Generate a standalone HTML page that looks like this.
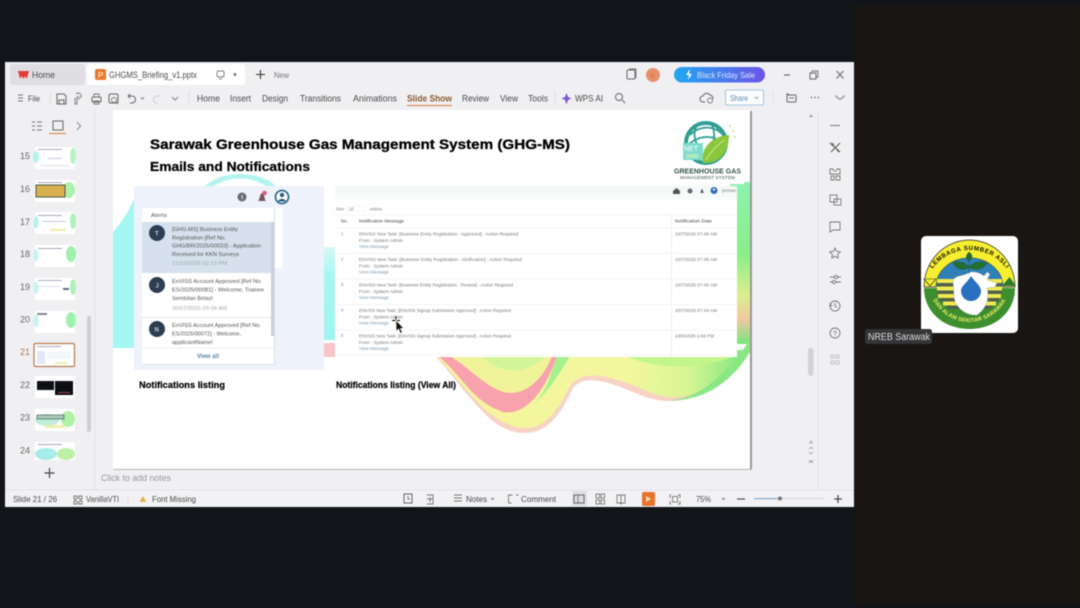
<!DOCTYPE html>
<html><head><meta charset="utf-8"><style>
html,body{margin:0;padding:0;width:1080px;height:608px;overflow:hidden;background:#111418}
svg{display:block;filter:blur(.5px)}
text{font-family:"Liberation Sans",sans-serif}
.t{font-size:9px;fill:#4a4a4a}
.s{font-size:5.2px;fill:#555}
.m{font-size:4.2px;fill:#777}
.l{font-size:4.2px;fill:#7b9bb2}
.b{font-weight:bold;fill:#000}
.i{fill:none;stroke:#666;stroke-width:1}
.r{fill:none;stroke:#777;stroke-width:.9}
</style></head><body>
<svg width="1080" height="608" viewBox="0 0 1080 608" xmlns="http://www.w3.org/2000/svg">
<defs>
<linearGradient id="pill" x1="0" x2="1"><stop offset="0" stop-color="#22a6f2"/><stop offset="1" stop-color="#6a55e8"/></linearGradient>
<linearGradient id="rg" x1="0" x2="0" y1="0" y2="1"><stop offset="0" stop-color="#8ef2b0"/><stop offset=".45" stop-color="#8cee88"/><stop offset=".7" stop-color="#dcee90"/><stop offset=".85" stop-color="#f0c8a0"/><stop offset="1" stop-color="#74e67c"/></linearGradient>
<linearGradient id="wv" x1="0" x2="1"><stop offset="0" stop-color="#f4f59a"/><stop offset=".6" stop-color="#f4f7a0"/><stop offset=".8" stop-color="#d9f594"/><stop offset="1" stop-color="#74e87c"/></linearGradient>
<linearGradient id="tp" x1="0" x2="0" y1="0" y2="1"><stop offset="0" stop-color="#f0f8f5"/><stop offset="1" stop-color="#f9fcfb"/></linearGradient>
<linearGradient id="cy" x1="0" x2="0" y1="0" y2="1"><stop offset="0" stop-color="#d4faf7"/><stop offset=".3" stop-color="#a8f6f2"/><stop offset="1" stop-color="#a0f4ef"/></linearGradient>
<path id="arcT" d="M930.500 271.600A46 46 0 0 1 1008.500 271.600"/>
<path id="arcB" d="M928.500 281A41 41 0 0 0 1010.500 281"/>
</defs>

<rect x="855" y="5" width="225" height="600" fill="#181513"/>

<!-- window -->
<rect x="5" y="62" width="849" height="445" fill="#f0f0f3"/>
<rect x="10" y="64" width="75" height="21" rx="3" fill="#dfdfe3"/>
<rect x="87" y="64" width="158" height="21" rx="3" fill="#fff"/>
<path d="M18 71h11l-2.200 8-1.600-3-1.700 3-1.700-3-1.600 3z" fill="#e23a3a"/>
<text class="t" x="32" y="78" textLength="23" lengthAdjust="spacingAndGlyphs" fill="#555">Home</text>
<rect x="95" y="69" width="11" height="11" rx="2" fill="#e8792b"/>
<text x="98" y="78" font-size="8" fill="#fff">P</text>
<text class="t" x="109" y="78" textLength="88" lengthAdjust="spacingAndGlyphs">GHGMS_Briefing_v1.pptx</text>
<rect x="217" y="71" width="7" height="6" rx="1.500" class="r"/><path d="M219 79h3" class="r"/>
<circle cx="235" cy="74.500" r="1.500" fill="#777"/>
<path d="M256 74.500h9M260.500 70v9" stroke="#333" stroke-width="1.100" fill="none"/>
<text class="s" x="274" y="78" style="font-size:8px;fill:#777" textLength="15" lengthAdjust="spacingAndGlyphs">New</text>

<rect x="627" y="70" width="8" height="9" rx="1" class="i"/><path d="M629 69h7v9" class="r"/>
<circle cx="653" cy="75" r="7" fill="#e8906a"/>
<text x="650" y="78" font-size="6" fill="#c96a45">N</text>
<rect x="674" y="67" width="91" height="15.500" rx="7.700" fill="url(#pill)"/>
<path d="M690 69l-4 6h3l-1 5 4-6h-3z" fill="#fff"/>
<text x="697" y="78" font-size="8.500" fill="#d8e6fa" textLength="58" lengthAdjust="spacingAndGlyphs">Black Friday Sale</text>
<path d="M784 75h6" stroke="#555"/>
<rect x="810" y="73" width="6" height="6" class="i"/><path d="M812 73v-2h6v6h-2" class="r"/>
<path d="M836.500 71l7 7.500M843.500 71l-7 7.500" class="i"/>

<!-- toolbar -->
<path d="M18 95h5M18 98h5M18 101h5" class="r"/>
<text class="t" x="28" y="101.500" style="font-size:8.500px" textLength="12" lengthAdjust="spacingAndGlyphs">File</text>
<path d="M50 93v12" stroke="#ddd"/>
<path d="M57 94h7l2 2v8h-9z M59 100h5v4h-5z" class="i"/>
<path d="M76 94a3 3 0 0 1 5 3l-4 3v4h-2v-5l4-3" class="r"/>
<rect x="92" y="97" width="9" height="5" rx="1" class="i"/><path d="M94 97v-3h5v3M94 101h5v3h-5z" class="r"/>
<rect x="109" y="94" width="9" height="9" rx="1.500" class="i"/><circle cx="114" cy="100" r="2.500" class="r"/><path d="M116 102l2 2" class="r"/>
<path d="M128 96h4a3 3 0 0 1 0 7h-2M128 96l2-2M128 96l2 2" class="i"/>
<path d="M141 97.500l1.500 1.500 1.500-1.500" class="r"/>
<path d="M160 96h-3a3 3 0 0 0 0 7h1" fill="none" stroke="#ccc"/>
<path d="M172 97l3 3 3-3" class="r"/>
<path d="M189 92v13" stroke="#ddd"/>
<text class="t" x="197" y="101.500" textLength="23" lengthAdjust="spacingAndGlyphs">Home</text>
<text class="t" x="230" y="101.500" textLength="21" lengthAdjust="spacingAndGlyphs">Insert</text>
<text class="t" x="262" y="101.500" textLength="26" lengthAdjust="spacingAndGlyphs">Design</text>
<text class="t" x="300" y="101.500" textLength="41" lengthAdjust="spacingAndGlyphs">Transitions</text>
<text class="t" x="353" y="101.500" textLength="44" lengthAdjust="spacingAndGlyphs">Animations</text>
<text class="t" x="407" y="101.500" textLength="45" lengthAdjust="spacingAndGlyphs" style="fill:#8c5a30;font-weight:bold">Slide Show</text>
<rect x="407" y="105" width="45" height="1" fill="#d9783a"/>
<text class="t" x="462" y="101.500" textLength="27" lengthAdjust="spacingAndGlyphs">Review</text>
<text class="t" x="500" y="101.500" textLength="18" lengthAdjust="spacingAndGlyphs">View</text>
<text class="t" x="528" y="101.500" textLength="20" lengthAdjust="spacingAndGlyphs">Tools</text>
<path d="M555 92v13" stroke="#ddd"/>
<path d="M566.500 93l1.500 4 3.500 1.500-3.500 1.500-1.500 4.500-1.500-4.500-3.500-1.500 3.500-1.500z" fill="#7a55d8"/>
<text class="t" x="575" y="101.500" textLength="28" lengthAdjust="spacingAndGlyphs">WPS AI</text>
<circle cx="619" cy="97" r="3.500" class="i"/><path d="M622 100l3 3" class="i"/>
<path d="M705 102h-2a3 3 0 0 1 0-6 4 4 0 0 1 7-1 3.500 3.500 0 0 1 3 4" class="i"/><circle cx="710" cy="100.500" r="2.500" class="r"/>
<rect x="725.500" y="90" width="38" height="15" rx="1.500" fill="#fbfcfe" stroke="#8cb8d8" stroke-width=".8"/>
<text x="730" y="101" font-size="8.500" fill="#5b8cb0" textLength="18" lengthAdjust="spacingAndGlyphs">Share</text>
<path d="M755 97l1.500 1.500 1.500-1.500" stroke="#999" fill="none"/>
<path d="M773 92v13" stroke="#e3e3e6"/>
<rect x="787" y="95" width="9" height="7" rx="1" class="i"/><path d="M786 94h3M789 98h5" class="r"/>
<circle cx="811.500" cy="97.500" r=".7" fill="#555"/><circle cx="815" cy="97.500" r=".7" fill="#555"/><circle cx="818.500" cy="97.500" r=".7" fill="#555"/>
<path d="M835 95.500l5 4 5-4" class="r"/>

<!-- left panel -->
<path d="M95 110v380" stroke="#e4e4e8"/>
<path d="M32 122h3M32 126h3M32 130h3M37 122h5M37 126h5M37 130h5" class="r"/>
<rect x="53" y="121" width="10" height="9" class="i"/>
<rect x="49" y="133" width="17" height="1" fill="#d9783a"/>
<path d="M77 122l3.500 4-3.500 4" class="r"/>
<g font-size="9" fill="#666">
<text x="20" y="159">15</text><text x="20" y="192">16</text><text x="20" y="225">17</text><text x="20" y="257">18</text><text x="20" y="290">19</text><text x="20" y="322.500">20</text><text x="20" y="355" fill="#b07a50">21</text><text x="20" y="388">22</text><text x="20" y="420.500">23</text><text x="20" y="453.500">24</text>
</g>
<!-- thumbs -->
<g>
<rect x="35" y="147" width="40" height="22" fill="#fff"/><ellipse cx="36" cy="157" rx="3" ry="6" fill="#b5f3ee"/><ellipse cx="73" cy="156" rx="3" ry="8" fill="#b5f2c4"/><rect x="38" y="149" width="24" height="1" fill="#aab"/><rect x="48" y="158" width="14" height="1" fill="#ccd"/><rect x="40" y="165" width="30" height="1" fill="#dde"/>
<rect x="35" y="180" width="40" height="22" fill="#fff"/><ellipse cx="69" cy="190" rx="6" ry="8" fill="#b0f0b0"/><rect x="36" y="185" width="29" height="12" fill="#d8b050" stroke="#4a5a40"/><rect x="38" y="182" width="24" height="1" fill="#aab"/>
<rect x="35" y="212" width="40" height="22" fill="#fff"/><ellipse cx="36" cy="222" rx="2.500" ry="6" fill="#b5f3ee"/><ellipse cx="73" cy="221" rx="3" ry="8" fill="#aff1bc"/><rect x="38" y="215" width="24" height="1" fill="#aab"/><rect x="42" y="221" width="24" height="1" fill="#ccd"/><rect x="50" y="229" width="16" height="2" fill="#eef0b0"/>
<rect x="35" y="245" width="40" height="22" fill="#fff"/><ellipse cx="36" cy="255" rx="2.500" ry="6" fill="#c5f5ef"/><ellipse cx="71" cy="254" rx="5" ry="8" fill="#a0f0ae"/><rect x="38" y="248" width="24" height="1" fill="#aab"/>
<rect x="35" y="278" width="40" height="22" fill="#fff"/><ellipse cx="36" cy="288" rx="2.500" ry="6" fill="#c5f5ef"/><ellipse cx="73" cy="287" rx="3" ry="8" fill="#aff1bc"/><rect x="38" y="280" width="24" height="1" fill="#aab"/><rect x="63" y="288" width="6" height="2" fill="#668"/><rect x="38" y="286" width="22" height="1" fill="#dde"/>
<rect x="35" y="311" width="40" height="22" fill="#fff"/><ellipse cx="36" cy="321" rx="2.500" ry="6" fill="#c5f5ef"/><ellipse cx="71" cy="320" rx="5" ry="8" fill="#a0f0ae"/><rect x="37" y="313" width="10" height="2" fill="#889"/>
<rect x="34" y="343.500" width="40.500" height="23" rx="1.500" fill="#fff" stroke="#b87a4c" stroke-width="1.200"/><rect x="37" y="351" width="8" height="13" fill="#dfe8f4"/><rect x="37" y="346" width="24" height="1" fill="#aab"/><rect x="47" y="351" width="24" height="8" fill="#f4f6f8"/><rect x="55" y="362" width="12" height="2" fill="#eef0b0"/>
<rect x="35" y="376" width="40" height="22" fill="#fff"/><rect x="37" y="381" width="17" height="9" fill="#0c1014"/><rect x="55" y="381" width="18" height="14" fill="#0c1014"/><rect x="58" y="392" width="12" height="1" fill="#a44"/>
<rect x="35" y="409" width="40" height="22" fill="#fff"/><ellipse cx="47" cy="420" rx="12" ry="6" fill="#bfeedd"/><ellipse cx="68" cy="419" rx="7" ry="8" fill="#b0f2a8"/><rect x="37" y="415" width="27" height="4" fill="#a8c8b8" stroke="#4a6a5a" stroke-width=".7"/><rect x="45" y="425" width="20" height="3" fill="#eef0b0"/>
<rect x="35" y="442" width="40" height="18" fill="#fff"/><ellipse cx="46" cy="454" rx="11" ry="6" fill="#a8ecea"/><ellipse cx="66" cy="454" rx="9" ry="6" fill="#bdf0a4"/><rect x="38" y="444" width="24" height="1" fill="#aab"/>
</g>
<rect x="87" y="316" width="4" height="116" rx="2" fill="#cfcfd3"/>
<path d="M44.500 473h10M49.500 468v10" stroke="#444" stroke-width="1.200"/>

<!-- right side -->
<path d="M818 110v380" stroke="#e2e2e6"/>
<path d="M811 114.500l1.800 2.500h-3.600z" fill="#888"/>
<rect x="808" y="348" width="5.500" height="28" rx="2.500" fill="#d2d2d6"/>
<path d="M811 441l1.500 2h-3z M809 449l2-2 2 2M809 452l2 2 2-2M809 460l2 2 2-2M809 463l2-2 2 2" fill="none" stroke="#888" stroke-width=".6"/>
<path d="M830 125.500h10" stroke="#777"/>
<path d="M830 143l10 9M840 143l-9 9M832 143l2 2M837 150l2 2" stroke="#666" stroke-width="1.200" fill="none"/>
<path d="M830 169h3a2 2 0 0 0 4 0h3v5h-10zM831 176h3v4h-3zM836 176h4v4h-4z" class="r"/>
<rect x="830" y="195" width="7" height="7" class="r"/><rect x="834" y="199" width="7" height="6" class="r"/>
<path d="M830 222h10v8h-7l-3 2z" class="r"/>
<path d="M835 248l1.600 3.300 3.700.5-2.700 2.600.6 3.600-3.200-1.700-3.200 1.700.6-3.600-2.700-2.600 3.700-.5z" class="r"/>
<path d="M830 277h4M838 277h3M830 282h2M836 282h5" class="r"/><circle cx="836" cy="277" r="1.600" class="r"/><circle cx="834" cy="282" r="1.600" class="r"/>
<circle cx="835" cy="306" r="5" class="r"/><path d="M835 303v3l2 1.500M830 303l0 2.500h2.500" class="r"/>
<circle cx="835" cy="333" r="5" class="r"/><text x="833" y="336" font-size="7" fill="#666">?</text>
<g fill="none" stroke="#c0c0c4" stroke-width=".9"><rect x="831" y="355" width="3" height="3"/><rect x="836" y="355" width="3" height="3"/><rect x="831" y="361" width="3" height="3"/><rect x="836" y="361" width="3" height="3"/></g>

<!-- notes/status -->
<text class="t" x="101" y="481" textLength="70" lengthAdjust="spacingAndGlyphs" style="fill:#999">Click to add notes</text>
<rect x="5" y="490" width="849" height="17" fill="#f2f2f5"/>
<path d="M5 490H854" stroke="#e3e3e6"/>
<text class="t" x="13" y="502" textLength="44" lengthAdjust="spacingAndGlyphs" style="font-size:8.500px">Slide 21 / 26</text>
<path d="M74 496h3v2h2v-2h3v3h-2v2h2v3h-3v-2h-2v2h-3v-3h2v-2h-2z" class="r"/>
<text class="t" x="86" y="502" textLength="33" lengthAdjust="spacingAndGlyphs" style="font-size:8.500px">VanillaVTI</text>
<path d="M128 495v9" stroke="#f0d8d0"/>
<path d="M143 496l3.500 6h-7z" fill="#eab04a"/>
<text class="t" x="152" y="502" textLength="44" lengthAdjust="spacingAndGlyphs" style="font-size:8.500px">Font Missing</text>
<rect x="404" y="494" width="8" height="9" class="i"/><path d="M408 496v3h2" class="r"/>
<path d="M427 495h6v9h-6M427 499h6M430 497v5" class="r"/>
<path d="M454 495h8M454 498h8M454 501h8" class="r"/>
<text class="t" x="466" y="502" textLength="21" lengthAdjust="spacingAndGlyphs" style="font-size:8.500px">Notes</text>
<path d="M491 498l1.500 1.500 1.500-1.500" class="r"/>
<path d="M508.500 503v-8h4M516 495h2.500M508.500 503h3" class="r"/>
<text class="t" x="521" y="502" textLength="35" lengthAdjust="spacingAndGlyphs" style="font-size:8.500px">Comment</text>
<rect x="572" y="491" width="15" height="15" fill="#dedee2"/>
<rect x="574" y="495" width="10" height="8" class="i"/><path d="M578 495v8" class="r"/>
<rect x="596" y="494" width="3.500" height="4" class="r"/><rect x="601" y="494" width="3.500" height="4" class="r"/><rect x="596" y="500" width="3.500" height="4" class="r"/><rect x="601" y="500" width="3.500" height="4" class="r"/>
<path d="M617 495h3l1 1 1-1h3v8h-3l-1 1-1-1h-3zM621 496v7" class="r"/>
<rect x="642" y="492" width="13" height="14" rx="2" fill="#e8722c"/>
<path d="M646 496l5 3-5 3z" fill="#f6e6b0"/>
<path d="M671 495h-1v3M678 495h2v3M671 504h-1v-3M678 504h2v-3" class="r"/><rect x="672.500" y="496.500" width="5" height="5.500" class="r"/>
<text class="t" x="696" y="502" textLength="15" lengthAdjust="spacingAndGlyphs" style="font-size:8.500px">75%</text>
<path d="M722 498l1.500 1.500 1.500-1.500" class="r"/>
<path d="M737 499h8" stroke="#444" stroke-width="1.100"/>
<rect x="754" y="498" width="70" height="1" fill="#d4d4d8"/>
<rect x="754" y="498" width="26" height="1.200" fill="#8aa8c8"/>
<circle cx="780" cy="498.500" r="2" fill="#777"/>
<path d="M834 499h8M838 495v8" stroke="#333" stroke-width="1.100"/>

<!-- slide -->
<rect x="113" y="469" width="639" height="1" fill="#bbb"/>
<rect x="750" y="111" width="2" height="358" fill="#999"/>
<rect x="113" y="110" width="637" height="358.500" fill="#fff"/>
<!-- decorative -->
<path d="M113 232C122 222 130 210 138 190L138 348H113z" fill="#a4f6f2"/>
<path d="M205 186C222 170 258 170 276 186H266C250 176 230 176 214 186z" fill="#b4f4ee"/>
<path d="M323 247h14v93h-14z" fill="url(#cy)"/>
<path d="M323 343h14v14h-14z" fill="#f7c4c7"/>
<rect x="730" y="182" width="20" height="162" fill="url(#rg)"/>
<path d="M437 358C470 395 490 432 523 433C550 434 562 410 572 390C582 372 610 382 640 395C665 405 685 402 705 392C725 382 740 360 750 340V350H437z" fill="#f7d3c6"/>
<path d="M437 356C470 392 490 425 523 428C548 430 560 405 570 386C582 368 610 376 640 388C665 400 685 400 705 388C725 378 740 358 750 338V350H437z" fill="url(#wv)"/>
<path d="M437 355C465 378 470 400 503 412C525 416 545 392 557 356z" fill="#f7a2ac"/>
<path d="M450 356C470 368 490 392 510 393C530 393 545 375 552 356z" fill="#f1f39a"/>
<path d="M480 356C500 372 520 378 545 357z" fill="#d2f59a"/>
<path d="M557 356L570 356C560 372 550 390 533 405C548 390 550 375 557 356z" fill="#a6f090"/>
<path d="M668 400C695 400 722 380 750 340V352C730 385 700 402 668 400z" fill="#8ae884"/>
<path d="M625 356C660 370 700 370 735 356z" fill="#c4f58c"/>

<!-- titles -->
<text class="b" x="150" y="149" font-size="14" textLength="420" lengthAdjust="spacingAndGlyphs" stroke="#000" stroke-width=".3">Sarawak Greenhouse Gas Management System (GHG-MS)</text>
<text class="b" x="150" y="171" font-size="13" textLength="160" lengthAdjust="spacingAndGlyphs" stroke="#000" stroke-width=".25">Emails and Notifications</text>
<text class="b" x="139" y="388" font-size="9" textLength="86" lengthAdjust="spacingAndGlyphs" stroke="#000" stroke-width=".2">Notifications listing</text>
<text class="b" x="336" y="388" font-size="9" textLength="120" lengthAdjust="spacingAndGlyphs" stroke="#000" stroke-width=".2">Notifications listing (View All)</text>

<!-- GHG logo -->
<rect x="672" y="120" width="72" height="64" fill="#fff"/>
<circle cx="706" cy="143" r="20" fill="none" stroke="#2f9e94" stroke-width="4"/>
<path d="M690 135C700 125 715 125 724 136M697 125C692 135 695 145 703 150M712 125C716 135 714 142 710 150M688 145C700 134 716 134 726 147" fill="none" stroke="#2f9e94" stroke-width="1.800"/>
<rect x="683" y="143" width="20" height="17" fill="#7fdccc"/>
<text x="684" y="151" font-size="7" fill="#fff">NET</text>
<text x="686" y="158" font-size="5.500" fill="#e9f4a8" font-weight="bold">2050</text>
<path d="M703 163C700 148 712 136 729 135C729 152 720 164 703 163z" fill="#8ac63e"/>
<path d="M706 160C712 150 718 144 725 140" stroke="#d4ec90" fill="none"/>
<circle cx="730" cy="126" r=".9" fill="#cdbf5a"/><circle cx="733" cy="131" r=".9" fill="#cdbf5a"/><circle cx="735" cy="137" r=".9" fill="#cdbf5a"/>
<text x="674" y="173.500" font-size="7" fill="#37544a" textLength="67" lengthAdjust="spacingAndGlyphs" font-weight="bold">GREENHOUSE GAS</text>
<text x="680" y="179" font-size="4.200" fill="#37544a" textLength="55" lengthAdjust="spacingAndGlyphs">MANAGEMENT SYSTEM</text>

<!-- alerts panel -->
<rect x="134" y="186" width="190" height="184" fill="#eef3fb"/>
<circle cx="242" cy="197" r="4.500" fill="#666b72"/><rect x="241.500" y="195" width="1.200" height="4" fill="#ddd"/>
<path d="M258 201c2-1.500 1.500-7 4-8 3 1 2 6.500 4 8z" fill="#7a5560"/><circle cx="264.500" cy="193" r="2.300" fill="#df5a75"/>
<circle cx="282" cy="197" r="6.500" fill="#fff" stroke="#2e6f8e" stroke-width="1.800"/><circle cx="282" cy="195" r="2.200" fill="#2e5e7e"/><path d="M278 201.500c1-3.500 7-3.500 8 0" fill="#2e5e7e"/>
<rect x="275" y="208" width="8" height="60" fill="#fff"/>
<rect x="143" y="209" width="132" height="156" fill="#d8dde4"/>
<rect x="142" y="208" width="132" height="156" fill="#fff"/>
<text x="151" y="217" font-size="5.500" fill="#555" textLength="16" lengthAdjust="spacingAndGlyphs">Alerts</text>
<rect x="142" y="222" width="129" height="51" fill="#d6e1ed"/>
<rect x="271" y="222" width="3" height="114" fill="#c9d1dc"/>
<path d="M142 317.500h129" stroke="#e3e3e3"/>
<rect x="142" y="348" width="132" height="16" fill="#fff"/>
<path d="M142 348h132" stroke="#eee"/>
<circle cx="157" cy="233" r="8" fill="#2c3e50"/><circle cx="157" cy="285" r="8" fill="#2c3e50"/><circle cx="157" cy="329" r="8" fill="#2c3e50"/>
<text x="155" y="235.500" font-size="6" font-weight="bold" fill="#ccd">T</text>
<text x="155.500" y="287.500" font-size="6" font-weight="bold" fill="#ccd">J</text>
<text x="154.500" y="331.500" font-size="6" font-weight="bold" fill="#ccd">N</text>
<text class="s" x="172" y="231" textLength="66" lengthAdjust="spacingAndGlyphs">[GHG-MS] Business Entity</text>
<text class="s" x="172" y="239.500" textLength="54" lengthAdjust="spacingAndGlyphs">Registration [Ref No.</text>
<text class="s" x="172" y="247.500" textLength="89" lengthAdjust="spacingAndGlyphs">GHG/BR/2025/00033] - Application</text>
<text class="s" x="172" y="256" textLength="67" lengthAdjust="spacingAndGlyphs">Received for KKN Surveys</text>
<text class="s" x="172" y="265" textLength="55" lengthAdjust="spacingAndGlyphs" style="fill:#9aa">21/10/2025 02:19 PM</text>
<text class="s" x="172" y="283" textLength="90" lengthAdjust="spacingAndGlyphs">EnVISS Account Approved [Ref No.</text>
<text class="s" x="172" y="291.500" textLength="92" lengthAdjust="spacingAndGlyphs">ES/2025/00081] - Welcome, Trainee</text>
<text class="s" x="172" y="300" textLength="41" lengthAdjust="spacingAndGlyphs">Sembilan Belas!</text>
<text class="s" x="172" y="310" textLength="55" lengthAdjust="spacingAndGlyphs" style="fill:#aaa">30/07/2025 09:08 AM</text>
<text class="s" x="172" y="327" textLength="89" lengthAdjust="spacingAndGlyphs">EnVISS Account Approved [Ref No.</text>
<text class="s" x="172" y="335.500" textLength="69" lengthAdjust="spacingAndGlyphs">ES/2025/00072] - Welcome,</text>
<text class="s" x="172" y="344" textLength="41" lengthAdjust="spacingAndGlyphs">applicantName!</text>
<text x="197" y="358" font-size="6" font-weight="bold" fill="#5b87a8" textLength="22" lengthAdjust="spacingAndGlyphs">View all</text>

<!-- table -->
<rect x="335" y="186" width="402" height="171" fill="#fff"/>
<rect x="335" y="186" width="402" height="14" fill="url(#tp)"/>
<path d="M673 191l3.500-3 3.500 3v3h-7z" fill="#555"/>
<circle cx="690" cy="191" r="2.500" fill="#667"/>
<path d="M700 193c1-1 .5-3 2-4 1.500 1 1 3 2 4z" fill="#667"/>
<circle cx="714" cy="190.500" r="3.500" fill="#2f6fb0"/><circle cx="714" cy="189.500" r="1.100" fill="#fff"/>
<text class="m" x="722" y="192" textLength="14" lengthAdjust="spacingAndGlyphs">jemmee</text>
<text class="m" x="336" y="210.500" textLength="8" lengthAdjust="spacingAndGlyphs">Show</text>
<rect x="347" y="206.500" width="17" height="5" fill="#fff" stroke="#eee" stroke-width=".5"/>
<text class="m" x="349" y="210.500">10</text>
<text class="m" x="370" y="210.500" textLength="12" lengthAdjust="spacingAndGlyphs">entries</text>
<path d="M335 215h402M335 228h402M335 253.500h402M335 279h402M335 304.500h402M335 330h402M335 355h402" stroke="#f0f0f0" stroke-width=".7"/>
<path d="M671.500 215v140" stroke="#ececec" stroke-width=".7"/>
<text class="m" x="341" y="222.500" textLength="7" lengthAdjust="spacingAndGlyphs" style="fill:#444">No.</text>
<text class="m" x="359" y="222.500" textLength="45" lengthAdjust="spacingAndGlyphs" style="fill:#444">Notification Message</text>
<text class="m" x="675" y="222.500" textLength="37" lengthAdjust="spacingAndGlyphs" style="fill:#444">Notification Date</text>

<text class="m" x="341" y="235">1</text>
<text class="m" x="359" y="235.500" textLength="159" lengthAdjust="spacingAndGlyphs">ENVISS New Task: [Business Entity Registration - Approved] - Action Required</text>
<text class="m" x="359" y="242" textLength="44" lengthAdjust="spacingAndGlyphs">From : System Admin</text>
<text class="l" x="359" y="248" textLength="30" lengthAdjust="spacingAndGlyphs">View Message</text>
<text class="m" x="675" y="235.500" textLength="42" lengthAdjust="spacingAndGlyphs">10/7/2025 07:49 AM</text>

<text class="m" x="341" y="260.500">2</text>
<text class="m" x="359" y="261" textLength="163" lengthAdjust="spacingAndGlyphs">ENVISS New Task: [Business Entity Registration - Verification] - Action Required</text>
<text class="m" x="359" y="267.500" textLength="44" lengthAdjust="spacingAndGlyphs">From : System Admin</text>
<text class="l" x="359" y="273.500" textLength="30" lengthAdjust="spacingAndGlyphs">View Message</text>
<text class="m" x="675" y="261" textLength="42" lengthAdjust="spacingAndGlyphs">10/7/2025 07:49 AM</text>

<text class="m" x="341" y="286">3</text>
<text class="m" x="359" y="286.500" textLength="154" lengthAdjust="spacingAndGlyphs">ENVISS New Task: [Business Entity Registration - Review] - Action Required</text>
<text class="m" x="359" y="293" textLength="44" lengthAdjust="spacingAndGlyphs">From : System Admin</text>
<text class="l" x="359" y="299" textLength="30" lengthAdjust="spacingAndGlyphs">View Message</text>
<text class="m" x="675" y="286.500" textLength="42" lengthAdjust="spacingAndGlyphs">10/7/2025 07:45 AM</text>

<text class="m" x="341" y="311.500">4</text>
<text class="m" x="359" y="312" textLength="152" lengthAdjust="spacingAndGlyphs">ENVISS New Task: [ENVISS Signup Submission Approved] - Action Required</text>
<text class="m" x="359" y="318.500" textLength="44" lengthAdjust="spacingAndGlyphs">From : System Admin</text>
<text class="l" x="359" y="324.500" textLength="30" lengthAdjust="spacingAndGlyphs">View Message</text>
<text class="m" x="675" y="312" textLength="42" lengthAdjust="spacingAndGlyphs">10/7/2025 07:34 AM</text>

<text class="m" x="341" y="337">5</text>
<text class="m" x="359" y="337.500" textLength="152" lengthAdjust="spacingAndGlyphs">ENVISS New Task: [ENVISS Signup Submission Approved] - Action Required</text>
<text class="m" x="359" y="344" textLength="44" lengthAdjust="spacingAndGlyphs">From : System Admin</text>
<text class="l" x="359" y="350" textLength="30" lengthAdjust="spacingAndGlyphs">View Message</text>
<text class="m" x="675" y="337.500" textLength="39" lengthAdjust="spacingAndGlyphs">10/6/2025 3:59 PM</text>

<!-- cursor -->
<path d="M392 320.500h8M396 316.500v8" stroke="#000" stroke-width="1"/>
<path d="M396 320v11.500l2.500-2.300 2 4.300 2-1-2-4h3.500z" fill="#111" stroke="#fff" stroke-width=".8"/>

<!-- participant tile -->
<rect x="921" y="236" width="97" height="97" rx="5" fill="#fff"/>
<path d="M924 287A45.500 47 0 0 1 1015 287L1003 287A33.500 29 0 0 0 936 287z" fill="#f6ee2e" stroke="#222" stroke-width=".7"/>
<path d="M936 287A33.500 29 0 0 1 1003 287z" fill="#2f7fb8"/>
<path d="M924 288H1015C1015 312 995 329 969.500 329C944 329 924 312 924 288z" fill="#3d8f2e"/>
<rect x="937" y="279" width="65" height="4" fill="#f0ea50"/><rect x="937" y="283" width="65" height="3.500" fill="#50604a"/>
<rect x="937" y="286.500" width="65" height="4" fill="#f0ea50"/><rect x="937" y="290.500" width="65" height="3.500" fill="#50604a"/>
<rect x="938" y="294" width="63" height="4" fill="#f0ea50"/><rect x="940" y="298" width="59" height="3.500" fill="#50604a"/>
<rect x="943" y="301.500" width="53" height="4" fill="#f0ea50"/><rect x="947" y="305.500" width="45" height="3.500" fill="#50604a"/>
<path d="M924 279h12l-6 7z" fill="#f6ee2e" stroke="#222" stroke-width=".6"/>
<path d="M1002 286l7.500-9 6.500 9z" fill="#2a7a30"/>
<path d="M953 280C956 275 964 276 968 273C974 270 982 274 984 276L987 272 990 274 987 280 997 283 995 287 987 288C990 298 986 309 977 315 968 316 957 310 954 298z" fill="#fff" stroke="#888" stroke-width=".3"/>
<path d="M971 276C976 283 981 286 981 291A10 10 0 0 1 961 291C961 286 967 283 971 276z" fill="#2a6fc0"/>
<path d="M969 274V258M969 267C962 260 956 262 953 263 957 270 964 271 969 267M969 267C976 260 983 262 987 263 983 270 974 271 969 267M969 261C965 258 966 255 969 252 973 255 973 258 969 261" fill="#23702e" stroke="#1b4f22" stroke-width=".5"/>
<text font-size="6.200" font-weight="bold" fill="#111" letter-spacing=".55"><textPath href="#arcT" startOffset="50%" text-anchor="middle">LEMBAGA SUMBER ASLI</textPath></text>
<text font-size="5.500" font-weight="bold" fill="#f3ee6a" letter-spacing=".2"><textPath href="#arcB" startOffset="50%" text-anchor="middle">DAN ALAM SEKITAR SARAWAK</textPath></text>

<rect x="865" y="329" width="67" height="15" rx="2.500" fill="#343537"/>
<text x="868" y="340" font-size="10" fill="#dcdcdc" textLength="62" lengthAdjust="spacingAndGlyphs">NREB Sarawak</text>
</svg>
</body></html>
